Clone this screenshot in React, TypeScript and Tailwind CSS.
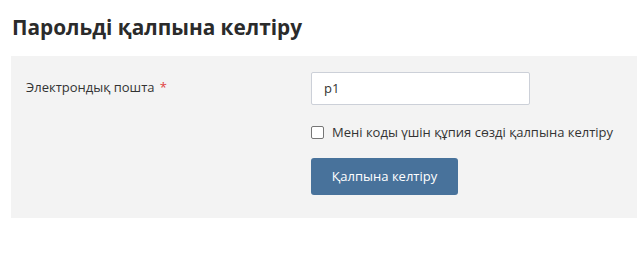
import React from "react";

export default function App() {
  return (
    <div className="w-[637px] h-[254px] bg-white overflow-hidden" style={{ fontFamily: '"Open Sans", sans-serif' }}>
      <h1 className="pl-3 pt-[11px] h-[56px] text-[20.8px] font-bold text-[#2b2b2b] leading-[32px]">Парольді қалпына келтіру</h1>
      <div className="ml-[11px] bg-[#f3f3f3] h-[162px] flex pt-[16px]">
        <div className="w-[300px] pl-[15px] pt-[5px] text-[13px] text-[#333] leading-[20px]">
          Электрондық пошта <span className="text-[#e04040] ml-[2px]">*</span>
        </div>
        <div className="flex flex-col">
          <div className="w-[219px] h-[33px] bg-white border border-[#ccd0d8] rounded-[2px] flex items-center pl-[12px] text-[13px] text-[#333]">p1</div>
          <label className="flex items-center mt-[17px] text-[13px] text-[#333] leading-[20px]">
            <span className="w-[13px] h-[13px] border border-[#767676] rounded-[2px] bg-white mr-[8px]"></span>
            Мені коды үшін құпия сөзді қалпына келтіру
          </label>
          <div className="mt-[16px] w-[147px] h-[37px] bg-[#48729b] rounded-[3px] text-white text-[13px] flex items-center justify-center">Қалпына келтіру</div>
        </div>
      </div>
    </div>
  );
}
